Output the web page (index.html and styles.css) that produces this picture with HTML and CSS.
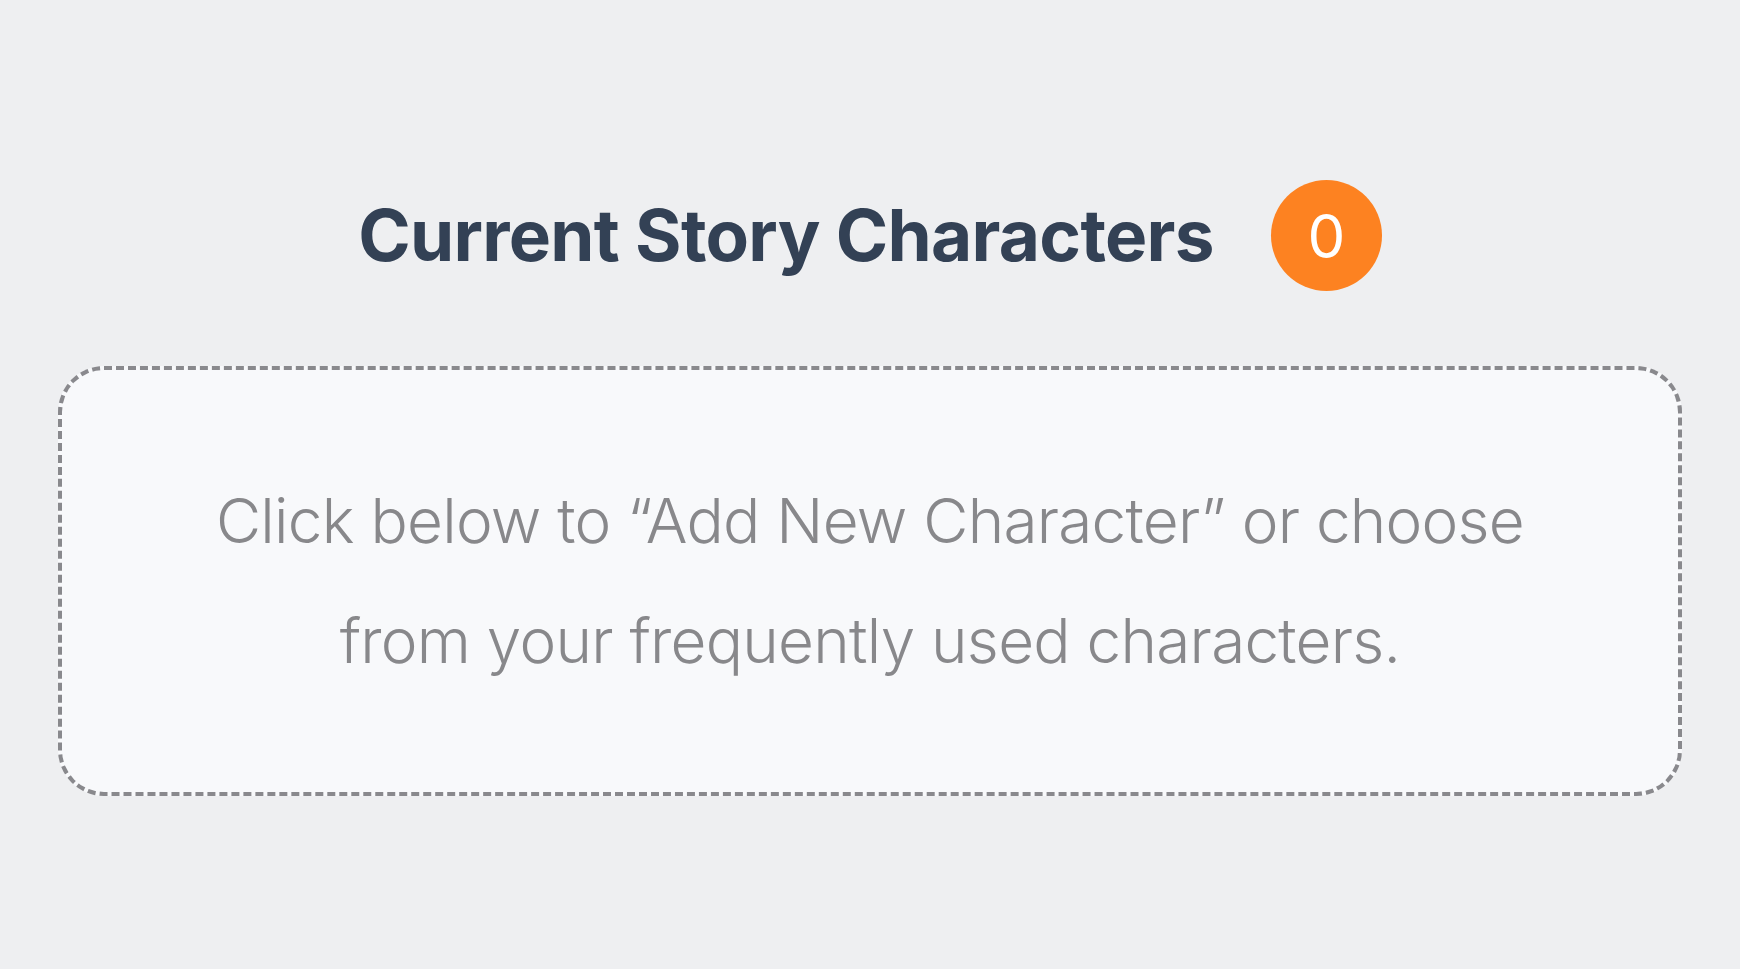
FILE: index.html
```html
<!DOCTYPE html>
<html lang="en">
<head>
<meta charset="utf-8">
<title>Current Story Characters</title>
<link rel="stylesheet" href="styles.css">
</head>
<body>
<main class="page">
  <header class="header">
    <h1 class="title">Current Story Characters</h1>
    <span class="badge">0</span>
  </header>
  <section class="empty">
    <p class="empty-text">Click below to “Add New Character” or choose from your frequently used characters.</p>
  </section>
</main>
</body>
</html>
```
FILE: styles.css
```css
html, body {
  margin: 0;
  padding: 0;
}
body {
  background: #eeeff1;
  font-family: Inter, "Noto Sans", "Liberation Sans", sans-serif;
}
.page {
  padding: 180px 58px 0;
}
.header {
  display: flex;
  justify-content: center;
  align-items: center;
  gap: 57px;
  height: 111px;
}
.title {
  margin: 0;
  font-size: 71px;
  font-weight: 700;
  letter-spacing: -0.01em;
  color: #334155;
  line-height: 1;
}
.badge {
  width: 111px;
  height: 111px;
  border-radius: 50%;
  background: #fd8221;
  color: #ffffff;
  font-size: 60px;
  font-weight: 400;
  display: flex;
  align-items: center;
  justify-content: center;
  line-height: 1;
}
.empty {
  margin-top: 75px;
  border: 4px dashed #89898d;
  border-radius: 46px;
  background: #f8f9fb;
  padding: 91px 40px;
  text-align: center;
}
.empty-text {
  margin: 0 auto;
  max-width: 1400px;
  font-size: 62px;
  line-height: 120px;
  font-weight: 300;
  letter-spacing: -0.012em;
  color: #88888b;
}
```
